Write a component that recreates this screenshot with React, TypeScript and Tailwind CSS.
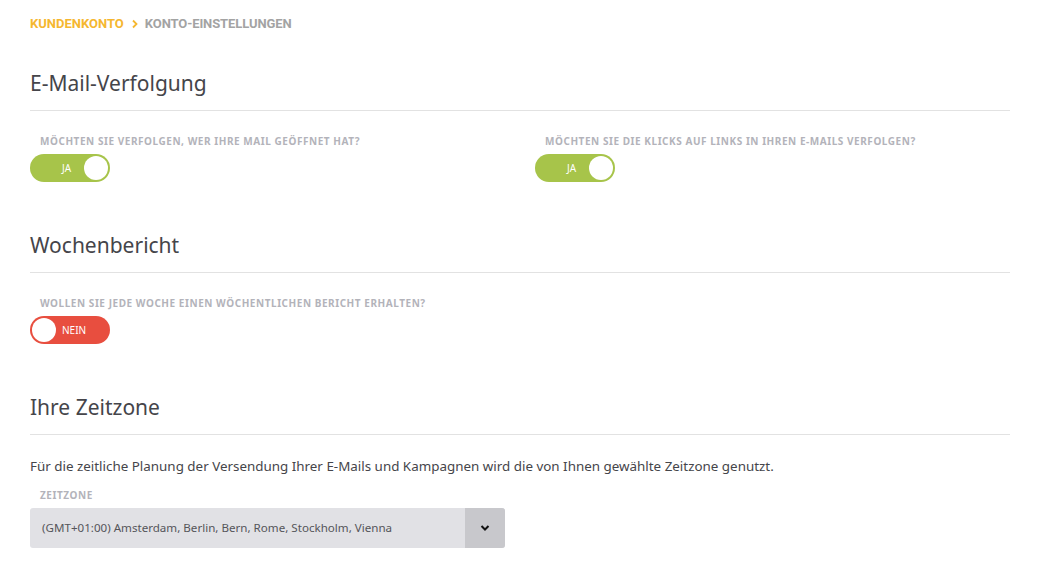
import React from "react";

function Toggle({ on, label }: { on: boolean; label: string }) {
  return (
    <div
      className={
        "relative flex h-[28px] w-[80px] items-center rounded-full " +
        (on ? "bg-[#a7c44a]" : "bg-[#e84e3f]")
      }
    >
      {on ? (
        <>
          <span className="ml-[32px] text-[10px] text-white">{label}</span>
          <span className="absolute right-[2px] top-[2px] h-[24px] w-[24px] rounded-full bg-white" />
        </>
      ) : (
        <>
          <span className="absolute left-[2px] top-[2px] h-[24px] w-[24px] rounded-full bg-white" />
          <span className="ml-[32px] text-[10px] text-white">{label}</span>
        </>
      )}
    </div>
  );
}

function Label({ children }: { children: React.ReactNode }) {
  return (
    <div className="pl-[10px] text-[10px] font-bold uppercase leading-[14px] tracking-[0.55px] text-[#b3b3ba]">
      {children}
    </div>
  );
}

function Heading({ children }: { children: React.ReactNode }) {
  return (
    <div className="border-b border-[#e2e2e2] pb-[12px]">
      <h2 className="text-[21px] leading-[30px] text-[#45454a]">{children}</h2>
    </div>
  );
}

export default function App() {
  return (
    <div
      className="min-h-[575px] w-[1045px] bg-white px-[30px] pt-[14px]"
      style={{ fontFamily: '"Noto Sans", "Open Sans", sans-serif' }}
    >
      <div
        className="flex items-center text-[13px] font-bold uppercase leading-[20px]"
        style={{ fontFamily: "Roboto, sans-serif" }}
      >
        <span className="text-[#f5b730]">Kundenkonto</span>
        <svg className="ml-[7px] mr-[6px]" width="8" height="10" viewBox="0 0 8 10">
          <path d="M2 1.5 L5.5 5 L2 8.5" fill="none" stroke="#f5b730" strokeWidth="1.8" />
        </svg>
        <span className="tracking-[-0.1px] text-[#a3a3a3]">Konto-Einstellungen</span>
      </div>

      <div className="w-[980px]">
        <div className="mt-[34px]">
          <Heading>E-Mail-Verfolgung</Heading>
          <div className="mt-[23px] grid grid-cols-[505px_1fr]">
            <div className="flex flex-col gap-[6px]">
              <Label>Möchten Sie verfolgen, wer Ihre Mail geöffnet hat?</Label>
              <Toggle on label="JA" />
            </div>
            <div className="flex flex-col gap-[6px]">
              <Label>Möchten Sie die Klicks auf Links in Ihren E-Mails verfolgen?</Label>
              <Toggle on label="JA" />
            </div>
          </div>
        </div>

        <div className="mt-[48px]">
          <Heading>Wochenbericht</Heading>
          <div className="mt-[23px] flex flex-col gap-[6px]">
            <Label>Wollen Sie jede Woche einen wöchentlichen Bericht erhalten?</Label>
            <Toggle on={false} label="NEIN" />
          </div>
        </div>

        <div className="mt-[48px]">
          <Heading>Ihre Zeitzone</Heading>
          <p className="mt-[21px] text-[13.4px] leading-[20px] text-[#45454a]">
            Für die zeitliche Planung der Versendung Ihrer E-Mails und Kampagnen wird die von Ihnen gewählte Zeitzone genutzt.
          </p>
          <div className="mt-[12px]">
            <Label>Zeitzone</Label>
          </div>
          <div className="mt-[6px] flex h-[40px] w-[475px] overflow-hidden rounded-[3px] bg-[#e1e1e5]">
            <div className="flex flex-1 items-center pl-[12px] text-[11.6px] text-[#55555a]">
              (GMT+01:00) Amsterdam, Berlin, Bern, Rome, Stockholm, Vienna
            </div>
            <div className="flex w-[40px] items-center justify-center bg-[#c8c8cc]">
              <svg width="10" height="8" viewBox="0 0 10 8">
                <path d="M1.5 2 L5 5.5 L8.5 2" fill="none" stroke="#111" strokeWidth="2" />
              </svg>
            </div>
          </div>
        </div>
      </div>
    </div>
  );
}
